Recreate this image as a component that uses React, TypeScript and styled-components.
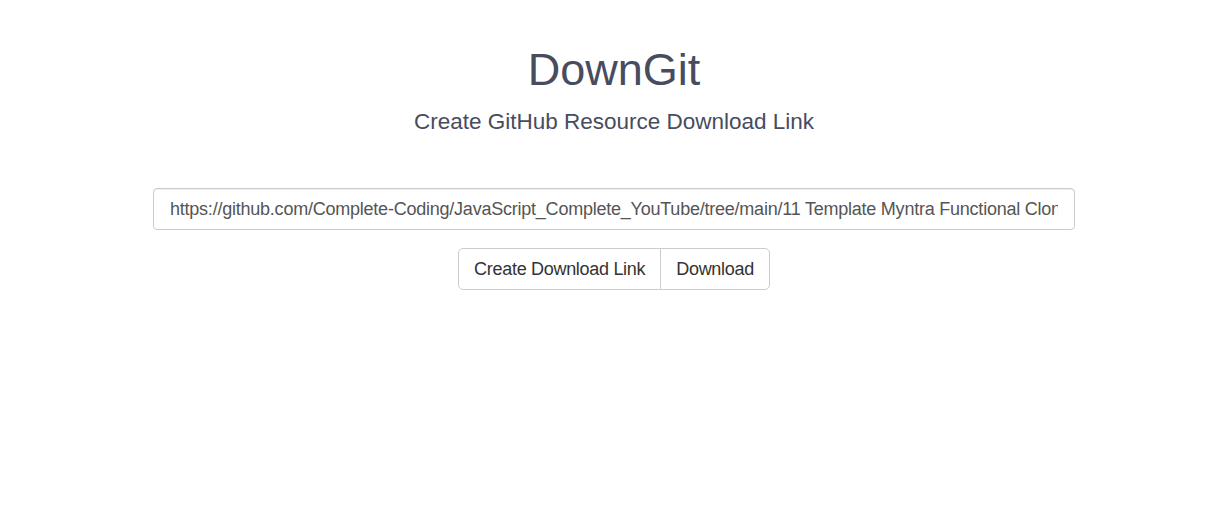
import React from "react";
import styled, { createGlobalStyle } from "styled-components";

const Global = createGlobalStyle`
  html, body { margin: 0; padding: 0; background: #fff; }
  body { font-family: "Liberation Sans", Arial, sans-serif; }
  * { box-sizing: border-box; }
`;

const Page = styled.main`
  display: flex;
  flex-direction: column;
  align-items: center;
  padding: 0 146px 0 153px;
`;

const Title = styled.h1`
  margin: 42px 0 0;
  font-size: 45px;
  font-weight: 400;
  line-height: 56px;
  color: #474c5f;
`;

const Subtitle = styled.h3`
  margin: 9px 0 0;
  font-size: 22.5px;
  font-weight: 400;
  line-height: 30px;
  color: #474c5f;
`;

const UrlInput = styled.input`
  margin-top: 51px;
  width: 922px;
  height: 42px;
  padding: 0 16px;
  font-family: inherit;
  font-size: 18px;
  letter-spacing: -0.23px;
  color: #555;
  border: 1px solid #ccc;
  border-radius: 4px;
  outline: none;
  box-shadow: inset 0 1px 1px rgba(0,0,0,.075);
`;

const Group = styled.div`
  display: flex;
  margin-top: 18px;
`;

const Btn = styled.button<{ $first?: boolean }>`
  height: 42px;
  padding: 0 15px;
  font-family: inherit;
  font-size: 18px;
  letter-spacing: -0.3px;
  color: #333;
  background: #fff;
  border: 1px solid #ccc;
  border-radius: ${p => (p.$first ? "5px 0 0 5px" : "0 5px 5px 0")};
  margin-left: ${p => (p.$first ? "0" : "-1px")};
  cursor: pointer;
`;

export default function App() {
  return (
    <>
      <Global />
      <Page>
        <Title>DownGit</Title>
        <Subtitle>Create GitHub Resource Download Link</Subtitle>
        <UrlInput
          defaultValue="https://github.com/Complete-Coding/JavaScript_Complete_YouTube/tree/main/11 Template Myntra Functional Clone"
        />
        <Group>
          <Btn $first>Create Download Link</Btn>
          <Btn>Download</Btn>
        </Group>
      </Page>
    </>
  );
}
